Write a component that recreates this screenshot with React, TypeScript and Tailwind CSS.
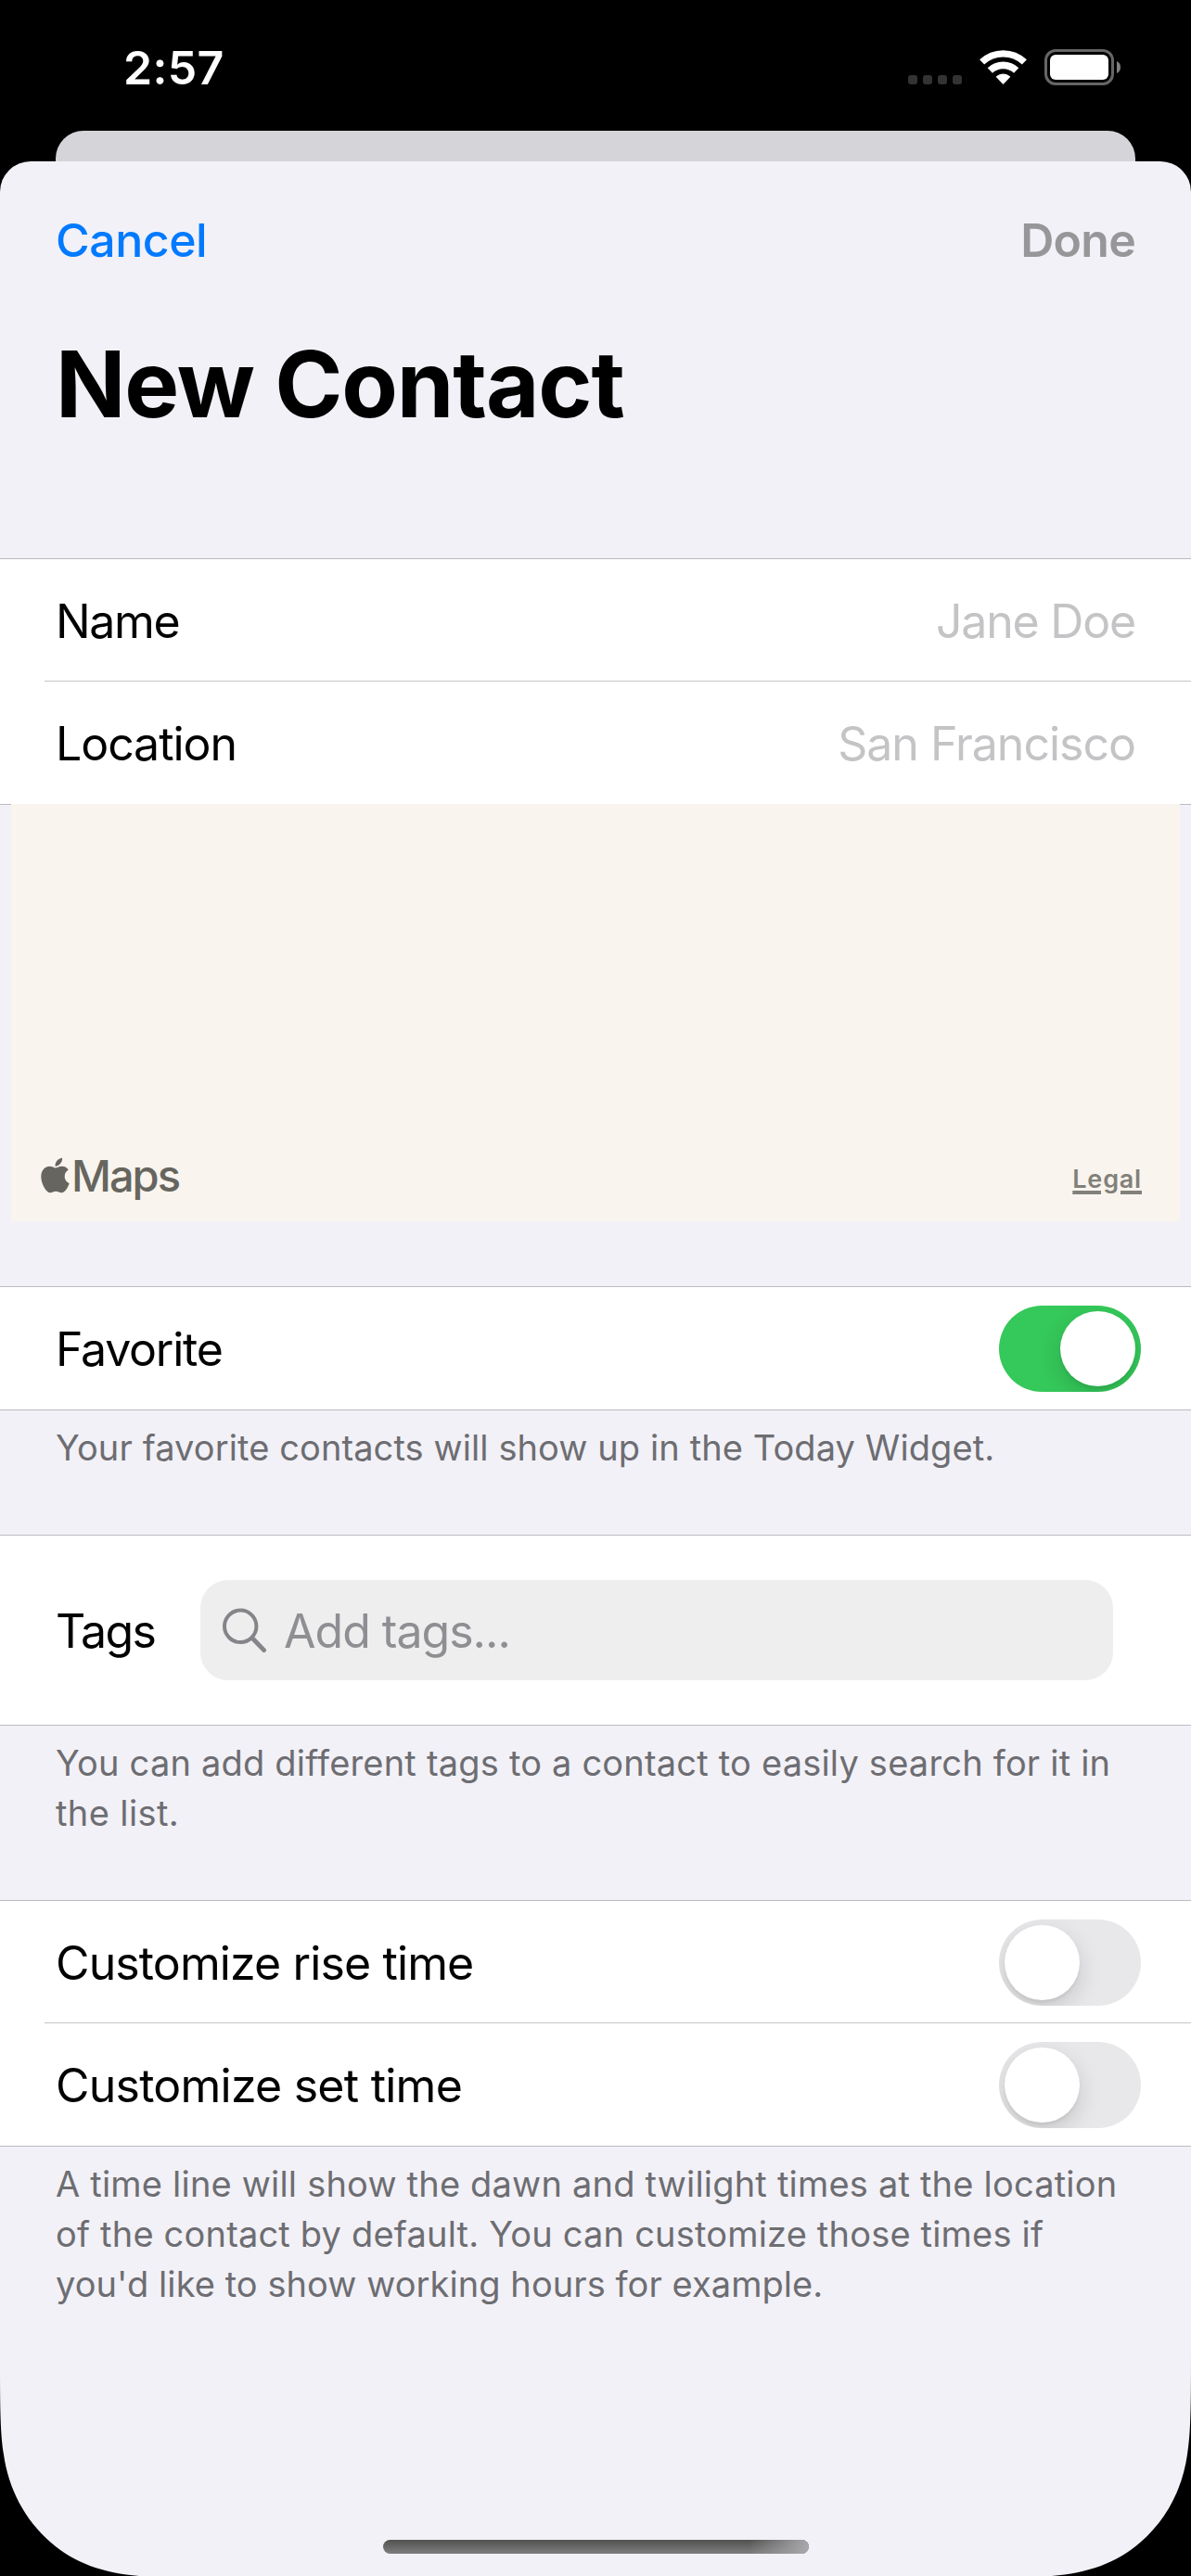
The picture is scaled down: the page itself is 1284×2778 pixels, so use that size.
import type { ReactNode } from "react";
import { FaApple } from "react-icons/fa";

function StatusBar() {
  return (
    <div className="flex h-[141px] items-start justify-between pt-[43px] pr-[76px] pl-[133px] text-white">
      <span className="text-[50px] leading-[60px] font-semibold tracking-[0.3px]">2:57</span>
      <div className="flex h-[49px] items-end">
        <div className="mr-[19px] mb-px flex gap-[6px]">
          {[0, 1, 2, 3].map((dot) => (
            <span key={dot} className="size-[10px] rounded-[3px] bg-[#333333]" />
          ))}
        </div>
        <svg className="mr-[19px] mb-px h-[37px] w-[51px]" viewBox="0 0 51 37" fill="none">
          <path d="M2.6 12.9A33.3 33.3 0 0 1 48.4 12.9" stroke="white" strokeWidth="7.3" />
          <path d="M11.3 22.1A20.6 20.6 0 0 1 39.7 22.1" stroke="white" strokeWidth="7.6" />
          <path
            d="M25.5 36 18.6 28.7A10.6 10.6 0 0 1 32.4 28.7Z"
            fill="white"
            stroke="white"
            strokeWidth="1.4"
            strokeLinejoin="round"
          />
        </svg>
        <svg className="h-[39px] w-[82px]" viewBox="0 0 82 39" fill="none">
          <rect x="1.5" y="1.5" width="72" height="36" rx="10.5" stroke="#666666" strokeWidth="3" />
          <rect x="6" y="6" width="63" height="27" rx="6" fill="white" />
          <path d="M78 13C80.500 14 82 16.500 82 19.500S80.500 25 78 26Z" fill="#808080" />
        </svg>
      </div>
    </div>
  );
}

function Group({ children }: { children: ReactNode }) {
  return <div className="border-y border-[#bcbbc2] bg-white">{children}</div>;
}

function Divider() {
  return <div className="ml-12 h-px bg-[#c6c6c8]" />;
}

function Toggle({ on = false }: { on?: boolean }) {
  return (
    <div
      className={
        on
          ? "mt-5 mr-[-6px] flex h-[93px] w-[153px] justify-end overflow-hidden rounded-full bg-[#35c85a] p-[6px]"
          : "mt-5 mr-[-6px] flex h-[93px] w-[153px] justify-start overflow-hidden rounded-full bg-[#e8e8ea] p-[6px]"
      }
    >
      <div className="size-[81px] rounded-full bg-white shadow-[0_9px_24px_rgba(0,0,0,0.15),0_3px_3px_rgba(0,0,0,0.05)]" />
    </div>
  );
}

function Label({ className, children }: { className: string; children: ReactNode }) {
  return <span className={`pt-[37px] text-[50px] leading-[60px] whitespace-nowrap ${className}`}>{children}</span>;
}

function Footer({ children }: { children: ReactNode }) {
  return (
    <div className="mb-[67px] pt-[13px] pl-[60px] text-[38px] leading-[54px] whitespace-nowrap text-[#6d6d72]">
      {children}
    </div>
  );
}

function ScreenCorner({ className }: { className: string }) {
  return (
    <svg className={`absolute bottom-0 h-[240px] w-[150px] ${className}`} viewBox="0 0 150 240">
      <path d="M0 2C0 50 0 85 4 109 9 145 26 179 55 204 80 226 112 237 150 240H0Z" fill="black" />
    </svg>
  );
}

export default function App() {
  return (
    <div className="relative flex h-[2778px] w-[1284px] flex-col overflow-hidden bg-black font-['Inter',sans-serif] text-black">
      <StatusBar />
      <div className="mx-[60px] h-[33px] shrink-0 rounded-t-[30px] bg-[#d5d4d9]" />

      <main className="flex-1 rounded-t-[33px] bg-[#f2f1f7]">
        <div className="flex justify-between px-[60px] pt-[55px] text-[50px] leading-[60px]">
          <span className="font-medium tracking-[-0.45px] text-[#007aff]">Cancel</span>
          <span className="font-semibold tracking-[-0.72px] text-[#979699]">Done</span>
        </div>
        <h1 className="mt-[65px] mb-32 pl-[60px] text-[99px] leading-[120px] font-bold tracking-[-1.13px]">
          New Contact
        </h1>

        <Group>
          <div className="flex h-[131px] items-start justify-between px-[60px]">
            <Label className="tracking-[-1.35px]">Name</Label>
            <Label className="tracking-[-1.2px] text-[#c4c4c6]">Jane Doe</Label>
          </div>
          <Divider />
          <div className="flex h-[132px] items-start justify-between px-[60px]">
            <Label className="tracking-[-1.06px]">Location</Label>
            <Label className="tracking-[-1px] text-[#c4c4c6]">San Francisco</Label>
          </div>
        </Group>

        <div className="relative mx-3 -mt-px mb-[70px] flex h-[450px] items-end justify-between bg-[#f9f4ed] pr-[41px] pl-8">
          <div className="mb-[25px] flex items-center text-[#66655f]">
            <FaApple className="-mt-px h-[43px] w-[31px]" preserveAspectRatio="none" />
            <span className="ml-[2px] text-[47px] leading-[48px] font-medium tracking-[-2px]">Maps</span>
          </div>
          <span className="mb-[29px] text-[27px] leading-8 font-semibold tracking-[0.8px] text-[#81807a] underline decoration-[4px] underline-offset-[3px]">
            Legal
          </span>
        </div>

        <Group>
          <div className="flex h-[132px] items-start justify-between px-[60px]">
            <Label className="tracking-[-1.23px]">Favorite</Label>
            <Toggle on />
          </div>
        </Group>
        <Footer>
          <p className="tracking-[0.1px]">Your favorite contacts will show up in the Today Widget.</p>
        </Footer>

        <Group>
          <div className="flex h-[204px] items-center pr-[84px] pl-[60px]">
            <span className="w-[156px] pt-[2px] text-[50px] leading-[60px] tracking-[-1.62px]">Tags</span>
            <div className="flex h-[108px] flex-1 items-center rounded-[30px] bg-[#eeeeef] pl-6">
              <svg className="size-12" viewBox="0 0 48 48" fill="none" stroke="#858589">
                <circle cx="19.200" cy="19.800" r="17.200" strokeWidth="4" />
                <path d="M32 32.500 44.600 45.600" strokeWidth="4.800" strokeLinecap="round" />
              </svg>
              <span className="ml-[18px] pt-[2px] text-[50px] leading-[60px] tracking-[-0.99px] text-[#8f8f93]">
                Add tags...
              </span>
            </div>
          </div>
        </Group>
        <Footer>
          <p className="tracking-[0.2px]">You can add different tags to a contact to easily search for it in</p>
          <p className="tracking-[0.39px]">the list.</p>
        </Footer>

        <Group>
          <div className="flex h-[131px] items-start justify-between px-[60px]">
            <Label className="tracking-[-0.88px]">Customize rise time</Label>
            <Toggle />
          </div>
          <Divider />
          <div className="flex h-[132px] items-start justify-between px-[60px]">
            <Label className="tracking-[-0.76px]">Customize set time</Label>
            <Toggle />
          </div>
        </Group>
        <Footer>
          <p className="tracking-[0.2px]">A time line will show the dawn and twilight times at the location</p>
          <p className="tracking-[0.19px]">of the contact by default. You can customize those times if</p>
          <p className="tracking-[0.07px]">you'd like to show working hours for example.</p>
        </Footer>
      </main>

      <ScreenCorner className="left-0" />
      <ScreenCorner className="right-0 -scale-x-100" />
      <div className="absolute bottom-6 left-[413px] h-[15px] w-[459px] overflow-hidden rounded-full bg-linear-to-b from-[#515250] to-[#7e7e80]">
        <div className="ml-auto h-full w-16 bg-linear-to-r from-transparent to-[#a9a8ac]" />
      </div>
    </div>
  );
}
